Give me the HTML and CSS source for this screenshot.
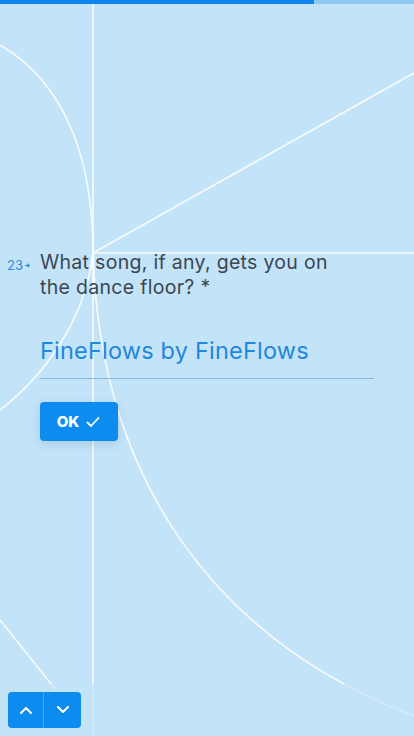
FILE: index.html
```html
<!DOCTYPE html>
<html lang="en">
<head>
  <meta charset="UTF-8" />
  <meta name="viewport" content="width=device-width, initial-scale=1" />
  <title>Wedding RSVP</title>
  <link rel="stylesheet" href="styles.css">
</head>
<body>

<svg class="backdrop" viewBox="0 0 414 736" preserveAspectRatio="none" aria-hidden="true">
  <g fill="none" stroke="#fff" stroke-width="1.7" stroke-opacity="0.85">
    <line x1="93" y1="4" x2="93" y2="736" />
    <line x1="93" y1="253" x2="414" y2="253" />
    <line x1="93" y1="253" x2="414" y2="73" />
    <path d="M0 45 C60 80, 93 150, 93 253" />
    <path d="M93 253 C85 320, 45 375, 0 410" />
    <path d="M93 253 C100 480, 215 640, 414 716" />
    <line x1="0" y1="620" x2="60" y2="695" />
  </g>
  <rect class="fade" x="0" y="684" width="414" height="52" />
</svg>

<div class="progress"><div class="progress-fill"></div></div>

<main class="stage">
  <div class="question">
    <span class="q-num">23<svg viewBox="0 0 8 8" width="7" height="7"><path d="M1 4h5M4 2l2 2-2 2" fill="none" stroke="currentColor" stroke-width="1.3"/></svg></span>
    <div class="q-body">
      <h1 class="q-title">What song, if any, gets you on the dance floor? *</h1>
      <div class="answer">FineFlows by FineFlows</div>
      <button class="ok" type="button">OK
        <svg viewBox="0 0 16 16" width="16" height="16"><path d="M2.5 8.5l3.5 3.5 7.5-8" fill="none" stroke="#fff" stroke-width="1.8" stroke-linecap="round" stroke-linejoin="round"/></svg>
      </button>
    </div>
  </div>
</main>

<nav class="nav">
  <button class="nav-btn" type="button" aria-label="Previous">
    <svg viewBox="0 0 14 8" width="14" height="8"><path d="M2 7l5-5 5 5" fill="none" stroke="#fff" stroke-width="2" stroke-linecap="round" stroke-linejoin="round"/></svg>
  </button>
  <button class="nav-btn" type="button" aria-label="Next">
    <svg viewBox="0 0 14 8" width="14" height="8"><path d="M2 1l5 5 5-5" fill="none" stroke="#fff" stroke-width="2" stroke-linecap="round" stroke-linejoin="round"/></svg>
  </button>
</nav>

</body>
</html>
```

FILE: styles.css
```css
body {
  font-family: Inter, "Open Sans", Arial, sans-serif;
  margin: 0;
  padding: 0;
  height: 100vh;
  background-color: #c3e3f8;
  display: flex;
  flex-direction: column;
  position: relative;
  overflow: hidden;
}

.backdrop {
  position: absolute;
  top: 0;
  left: 0;
  width: 100%;
  height: 100%;
}

.fade {
  fill: #c3e3f8;
  opacity: 0.7;
}

.progress {
  height: 4px;
  background-color: #8fc9f3;
  position: relative;
}

.progress-fill {
  width: 314px;
  height: 100%;
  background-color: #0d85ee;
}

.stage {
  flex: 1;
  padding: 246px 40px 0 7px;
  position: relative;
}

.question {
  display: flex;
}

.q-num {
  width: 33px;
  flex-shrink: 0;
  font-size: 13px;
  color: #2f8ae0;
  padding-top: 7px;
  display: flex;
  align-items: flex-start;
  gap: 1px;
}

.q-num svg {
  margin-top: 5px;
}

.q-body {
  flex: 1;
}

.q-title {
  margin: 0;
  max-width: 310px;
  font-size: 19.5px;
  font-weight: 400;
  line-height: 25px;
  letter-spacing: 0.3px;
  color: #3a4650;
}

.answer {
  margin-top: 35px;
  padding-bottom: 11px;
  font-size: 23.5px;
  line-height: 32px;
  letter-spacing: 0.2px;
  color: #1f87de;
  border-bottom: 1px solid #85b9e3;
}

.ok {
  margin-top: 23px;
  width: 78px;
  height: 39px;
  display: flex;
  align-items: center;
  justify-content: center;
  gap: 6px;
  padding: 0;
  border: none;
  border-radius: 4px;
  background-color: #0d8cf0;
  color: #fff;
  font-family: inherit;
  font-size: 15px;
  font-weight: 800;
  box-shadow: 0 3px 10px rgba(0, 60, 120, 0.15);
  cursor: pointer;
}

.nav {
  display: flex;
  padding: 0 0 8px 8px;
  position: relative;
}

.nav-btn {
  width: 36px;
  height: 36px;
  padding: 0;
  border: none;
  background-color: #0d8cf0;
  display: flex;
  align-items: center;
  justify-content: center;
  cursor: pointer;
}

.nav-btn:first-child {
  border-radius: 4px 0 0 4px;
  border-right: 1px solid #4aa8f0;
}

.nav-btn:last-child {
  border-radius: 0 4px 4px 0;
  width: 37px;
}
```
